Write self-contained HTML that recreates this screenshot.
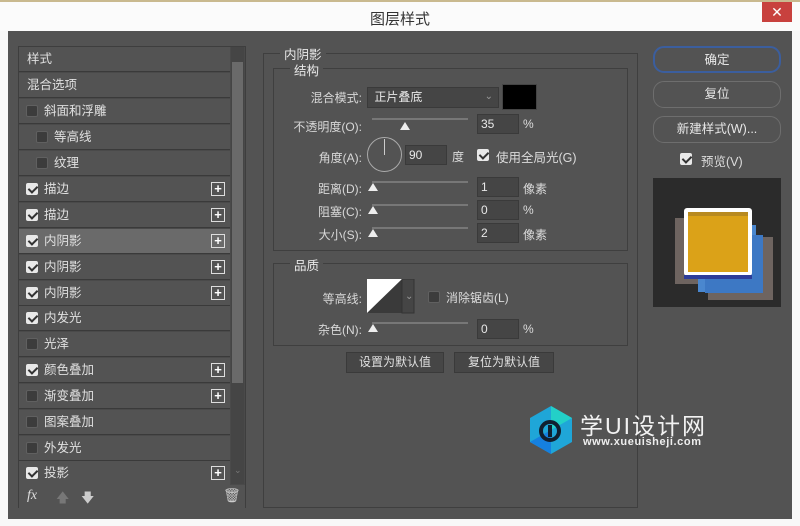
<!DOCTYPE html>
<html><head><meta charset="utf-8"><style>
*{box-sizing:border-box;margin:0;padding:0}
body{width:800px;height:526px;background:#f8f8f8;position:relative;overflow:hidden;font-family:"Liberation Sans","Noto Sans CJK SC",sans-serif;color:#dcdcdc;font-size:12px}
.a{position:absolute}
.title{left:0;top:0;width:800px;height:31px;background:#fbfbfb;border-top:2px solid #c9b98f}
.title span{position:absolute;left:370px;top:6px;font-size:15px;color:#333}
.close{left:762px;top:2px;width:30px;height:20px;background:#c8413e;color:#fff;text-align:center;font-size:14px;line-height:20px}
.main{left:8px;top:31px;width:784px;height:488px;background:#535353}
.list{left:18px;top:46px;width:228px;height:462px;border:1px solid #3e3e3e;background:#4a4a4a}
.row{position:absolute;left:0;width:211px;height:25px;border-bottom:1px solid #3a3a3a;background:#535353;line-height:24px;font-size:12.5px;color:#e0e0e0}
.row.sel{background:#6a6a6a}
.cb{position:absolute;top:6px;width:12px;height:12px;border-radius:2px;background:#3c3c3c;border:1px solid #606060}
.cb.on{background:#e8e8e8;border-color:#e8e8e8}
.cb.on:after{content:"";position:absolute;left:3px;top:0px;width:4px;height:7px;border:solid #333;border-width:0 2px 2px 0;transform:rotate(45deg)}
.plus{position:absolute;left:192px;top:5px;width:14px;height:14px;border:1px solid #ddd;color:#fff;font-size:13px;line-height:11px;text-align:center;font-weight:bold}
.sb{left:231px;top:47px;width:13px;height:437px;background:#454545}
.thumb{left:232px;top:62px;width:11px;height:321px;background:#6a6a6a}
.fs{border:1px solid #3f3f3f}
.leg{position:absolute;background:#535353;padding:0 4px;font-size:12.5px;color:#e8e8e8}
.lbl{position:absolute;text-align:right;font-size:12px;color:#d8d8d8}
.inp{position:absolute;height:20px;background:#454545;border:1px solid #3a3a3a;padding-left:3px;line-height:18px;color:#e8e8e8;font-size:12px}
.track{position:absolute;height:2px;background:#777}
.knob{position:absolute;width:0;height:0;border-left:5px solid transparent;border-right:5px solid transparent;border-bottom:8px solid #eee}
.btn{position:absolute;border:1px solid #6e6e6e;border-radius:11px;text-align:center;color:#e8e8e8;font-size:12.5px}
.b2{position:absolute;height:21px;background:#464646;border:1px solid #3a3a3a;text-align:center;line-height:19px;font-size:12px;color:#e0e0e0}
</style></head><body>
<div class="a title"><span>图层样式</span></div>
<div class="a close">✕</div>
<div class="a main"></div>

<div class="a list">
<div class="row" style="top:0"><span style="margin-left:8px">样式</span></div>
<div class="row" style="top:26px"><span style="margin-left:8px">混合选项</span></div>
<div class="row" style="top:52px"><i class="cb" style="left:7px"></i><span style="margin-left:25px">斜面和浮雕</span></div>
<div class="row" style="top:78px"><i class="cb" style="left:17px"></i><span style="margin-left:35px">等高线</span></div>
<div class="row" style="top:104px"><i class="cb" style="left:17px"></i><span style="margin-left:35px">纹理</span></div>
<div class="row" style="top:130px"><i class="cb on" style="left:7px"></i><span style="margin-left:25px">描边</span><b class="plus">+</b></div>
<div class="row" style="top:156px"><i class="cb on" style="left:7px"></i><span style="margin-left:25px">描边</span><b class="plus">+</b></div>
<div class="row sel" style="top:182px"><i class="cb on" style="left:7px"></i><span style="margin-left:25px">内阴影</span><b class="plus">+</b></div>
<div class="row" style="top:208px"><i class="cb on" style="left:7px"></i><span style="margin-left:25px">内阴影</span><b class="plus">+</b></div>
<div class="row" style="top:234px"><i class="cb on" style="left:7px"></i><span style="margin-left:25px">内阴影</span><b class="plus">+</b></div>
<div class="row" style="top:259px"><i class="cb on" style="left:7px"></i><span style="margin-left:25px">内发光</span></div>
<div class="row" style="top:285px"><i class="cb" style="left:7px"></i><span style="margin-left:25px">光泽</span></div>
<div class="row" style="top:311px"><i class="cb on" style="left:7px"></i><span style="margin-left:25px">颜色叠加</span><b class="plus">+</b></div>
<div class="row" style="top:337px"><i class="cb" style="left:7px"></i><span style="margin-left:25px">渐变叠加</span><b class="plus">+</b></div>
<div class="row" style="top:363px"><i class="cb" style="left:7px"></i><span style="margin-left:25px">图案叠加</span></div>
<div class="row" style="top:389px"><i class="cb" style="left:7px"></i><span style="margin-left:25px">外发光</span></div>
<div class="row" style="top:414px"><i class="cb on" style="left:7px"></i><span style="margin-left:25px">投影</span><b class="plus">+</b></div>
<div class="a" style="left:0;top:438px;width:226px;height:23px;background:#535353"></div>
<div class="a" style="left:8px;top:441px;font-style:italic;font-family:'Liberation Serif',serif;font-size:14px;color:#ddd">fx</div>
<div class="a" style="left:37px;top:442px;color:#777;font-size:13px">🡅</div>
<div class="a" style="left:62px;top:442px;color:#ccc;font-size:13px">🡇</div>
<div class="a" style="left:204px;top:440px;color:#ccc;font-size:14px">🗑</div>
</div>
<div class="a sb"></div><div class="a thumb"></div>
<div class="a" style="left:234px;top:465px;color:#777;font-size:9px">⌄</div>

<!-- middle -->
<div class="a fs" style="left:263px;top:53px;width:375px;height:455px"></div>
<div class="leg" style="left:280px;top:44px">内阴影</div>
<div class="a fs" style="left:273px;top:68px;width:355px;height:183px"></div>
<div class="leg" style="left:290px;top:60px">结构</div>

<div class="lbl" style="left:270px;top:89px;width:92px">混合模式:</div>
<div class="inp" style="left:367px;top:87px;width:132px;height:21px">&nbsp;正片叠底<span style="position:absolute;right:5px;top:0;color:#999;font-size:10px">⌄</span></div>
<div class="a" style="left:502px;top:84px;width:35px;height:26px;background:#000;border:1px solid #444"></div>

<div class="lbl" style="left:270px;top:118px;width:92px">不透明度(O):</div>
<div class="track" style="left:372px;top:118px;width:96px"></div>
<div class="knob" style="left:400px;top:122px"></div>
<div class="inp" style="left:477px;top:114px;width:42px">35</div>
<div class="a" style="left:523px;top:117px">%</div>

<div class="lbl" style="left:270px;top:149px;width:92px">角度(A):</div>
<div class="a" style="left:367px;top:137px;width:35px;height:35px;border:1px solid #aaa;border-radius:50%"></div>
<div class="a" style="left:384px;top:139px;width:1px;height:16px;background:#ccc"></div>
<div class="inp" style="left:405px;top:145px;width:42px">90</div>
<div class="a" style="left:452px;top:148px">度</div>
<i class="cb on a" style="left:477px;top:149px"></i>
<div class="a" style="left:496px;top:147px;font-size:12.5px">使用全局光(G)</div>

<div class="lbl" style="left:270px;top:180px;width:92px">距离(D):</div>
<div class="track" style="left:372px;top:181px;width:96px"></div>
<div class="knob" style="left:368px;top:183px"></div>
<div class="inp" style="left:477px;top:177px;width:42px">1</div>
<div class="a" style="left:523px;top:180px">像素</div>

<div class="lbl" style="left:270px;top:203px;width:92px">阻塞(C):</div>
<div class="track" style="left:372px;top:204px;width:96px"></div>
<div class="knob" style="left:368px;top:206px"></div>
<div class="inp" style="left:477px;top:200px;width:42px">0</div>
<div class="a" style="left:523px;top:203px">%</div>

<div class="lbl" style="left:270px;top:226px;width:92px">大小(S):</div>
<div class="track" style="left:372px;top:227px;width:96px"></div>
<div class="knob" style="left:368px;top:229px"></div>
<div class="inp" style="left:477px;top:223px;width:42px">2</div>
<div class="a" style="left:523px;top:226px">像素</div>

<div class="a fs" style="left:273px;top:263px;width:355px;height:83px"></div>
<div class="leg" style="left:290px;top:255px">品质</div>
<div class="lbl" style="left:270px;top:290px;width:92px">等高线:</div>
<svg class="a" style="left:367px;top:279px" width="48" height="35"><rect x="0" y="0" width="35" height="34" fill="#fff"/><polygon points="0,34 35,0 35,34" fill="#3a3a3a"/><rect x="35" y="0" width="12" height="34" fill="#454545" stroke="#333"/><text x="38" y="20" fill="#999" font-size="10">⌄</text></svg>
<i class="cb a" style="left:428px;top:291px"></i>
<div class="a" style="left:446px;top:289px">消除锯齿(L)</div>
<div class="lbl" style="left:270px;top:321px;width:92px">杂色(N):</div>
<div class="track" style="left:372px;top:322px;width:96px"></div>
<div class="knob" style="left:368px;top:324px"></div>
<div class="inp" style="left:477px;top:319px;width:42px">0</div>
<div class="a" style="left:523px;top:322px">%</div>

<div class="b2" style="left:346px;top:352px;width:98px">设置为默认值</div>
<div class="b2" style="left:454px;top:352px;width:100px">复位为默认值</div>

<!-- right -->
<div class="btn" style="left:653px;top:46px;width:128px;height:27px;line-height:25px;border:2px solid #3b5e9e">确定</div>
<div class="btn" style="left:653px;top:81px;width:128px;height:27px;line-height:25px">复位</div>
<div class="btn" style="left:653px;top:116px;width:128px;height:27px;line-height:25px">新建样式(W)...</div>
<i class="cb on a" style="left:680px;top:153px"></i>
<div class="a" style="left:701px;top:151px;font-size:12.5px">预览(V)</div>
<div class="a" style="left:653px;top:178px;width:128px;height:129px;background:#2b2b2b"></div>
<div class="a" style="left:675px;top:218px;width:25px;height:66px;background:#6e6460"></div>
<div class="a" style="left:708px;top:237px;width:65px;height:63px;background:#6e6460"></div>
<div class="a" style="left:698px;top:225px;width:58px;height:67px;background:#4a87cf"></div>
<div class="a" style="left:705px;top:235px;width:58px;height:58px;background:#3d78c4"></div>
<div class="a" style="left:684px;top:208px;width:68px;height:68px;background:#fff;border-radius:3px"></div>
<div class="a" style="left:688px;top:212px;width:60px;height:60px;background:#dba218;border-top:4px solid #b88a20"></div>
<div class="a" style="left:684px;top:275px;width:68px;height:4px;background:#2d3d9a"></div>

<!-- watermark -->
<svg class="a" style="left:528px;top:405px" width="46" height="50"><polygon points="23,1 44,13 44,37 23,49 2,37 2,13" fill="#1fa6d8"/><polygon points="23,1 44,13 23,25" fill="#23d0c8"/><polygon points="2,37 23,49 23,25" fill="#1580e0"/><circle cx="22" cy="26" r="9" fill="none" stroke="#102030" stroke-width="4"/><rect x="20" y="20" width="4" height="12" fill="#102030"/></svg>
<div class="a" style="left:580px;top:407px;font-size:23px;color:#f2f2f2;letter-spacing:2px">学UI设计网</div>
<div class="a" style="left:583px;top:436px;font-size:11px;color:#eee;font-weight:bold;letter-spacing:0.6px">www.xueuisheji.com</div>
</body></html>
